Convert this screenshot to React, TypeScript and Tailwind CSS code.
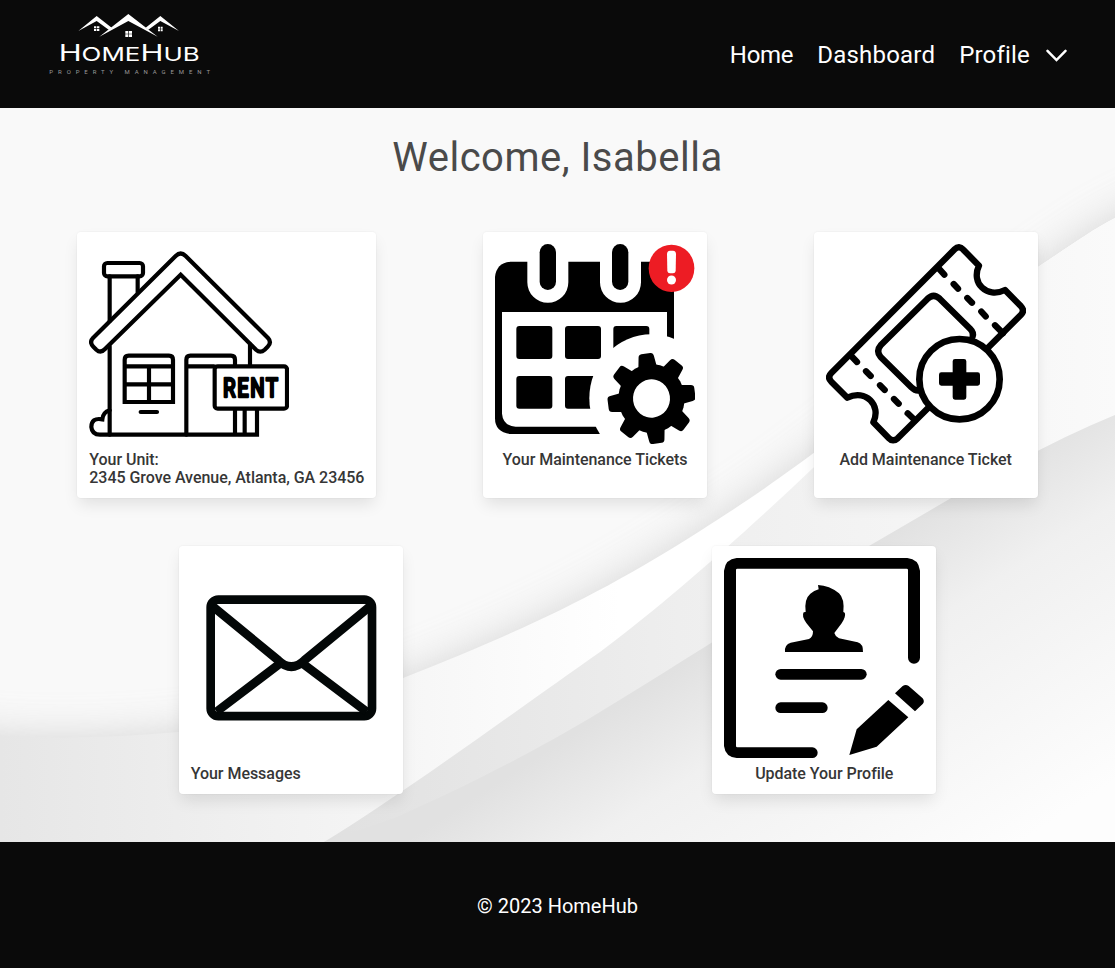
import type { ReactNode } from "react";

function Logo() {
  return (
    <svg className="h-[108px] w-[200px] shrink-0" viewBox="0 0 600 324" fill="#fff">
      <path d="M295 42 L383 110 L295 63 L208 110 Z" />
      <path d="M200 48 L245 83 L236 89 L200 63 L145 93 Z" />
      <path d="M391 48 L347 83 L355 89 L391 63 L447 93 Z" />
      <path d="M286 93h9v8h-9z M297 93h9v8h-9z M286 103h9v8h-9z M297 103h9v8h-9z" />
      <path d="M192 79h7v6h-7z M201 79h7v6h-7z M192 87h7v6h-7z M201 87h7v6h-7z" />
      <path d="M384 80h6v6h-6z M392 80h6v6h-6z M384 88h6v6h-6z M392 88h6v6h-6z" />
      <text x="86" y="182" textLength="423" lengthAdjust="spacingAndGlyphs" fontFamily="Inter, sans-serif" fontSize="68">
        H<tspan fontSize="57">OME</tspan>H<tspan fontSize="57">UB</tspan>
      </text>
      <text x="58" y="221" textLength="482" lengthAdjust="spacing" fontFamily="Roboto, sans-serif" fontSize="18" fill="#9a9a9a">
        PROPERTY MANAGEMENT
      </text>
    </svg>
  );
}

function HouseIcon() {
  return (
    <svg className="size-[200px]" viewBox="57 57 600 600" fill="none" stroke="#000" strokeWidth="12.5" strokeLinecap="round">
      <rect x="102" y="114" width="117" height="40" rx="10" />
      <path d="M119 154V288 M203 154V202 M119 364V629 M540 358V420" />
      <path d="M332 149L105 372Q92 386 79 374L70 365Q57 352 69 339L317 93Q332 78 347 93L594 339Q606 352 593 365L584 374Q571 386 558 374Z" />
      <path d="M119 556Q99 562 97 583Q64 577 64 606Q66 629 90 629H561V555 M524 555V629 M495 555V629" />
      <path d="M164 531V404Q164 392 176 392H297Q309 392 309 404V531Z M164 424H309 M164 478H309 M237 424V531 M212 561H261" />
      <path d="M349 629V404Q349 392 361 392H483Q495 392 495 404V420 M349 424H432" />
      <rect x="434" y="424" width="217" height="127" rx="9" />
      <text x="459" y="517" textLength="170" lengthAdjust="spacingAndGlyphs" fontFamily="Roboto, sans-serif" fontWeight="500" fontSize="80" letterSpacing="6" fill="#000" strokeWidth="7" strokeLinejoin="round">
        RENT
      </text>
    </svg>
  );
}

const teeth = [0, 45, 90, 135, 180, 225, 270, 315];

function CalendarIcon() {
  return (
    <svg className="size-[200px]" viewBox="60 57 600 600">
      <path d="M106 110H597V627H106Q60 622 60 580V156Q64 114 106 110Z" />
      <path d="M81 261H576V605H122Q84 602 81 566Z" fill="#fff" />
      <path d="M157 108V172A61.5 61.5 0 0 0 280 172V108Z M375 108V172A61.5 61.5 0 0 0 498 172V108Z" fill="#fff" />
      <rect x="194" y="57" width="49" height="138" rx="24.5" />
      <rect x="411" y="57" width="49" height="138" rx="24.5" />
      {[124, 270, 415].map((x) => (
        <g key={x}>
          <rect x={x} y="303" width="108" height="99" rx="9" />
          <rect x={x} y="453" width="108" height="98" rx="9" />
        </g>
      ))}
      <ellipse cx="529" cy="520" rx="186" ry="192" fill="#fff" />
      <g transform="translate(529.5 520.5) scale(.965 1) rotate(-7.5)">
        <circle r="103" />
        {teeth.map((a) => (
          <path key={a} d="M-29 -92L-24 -126Q-23 -136 -14 -136H14Q23 -136 24 -126L29 -92Z" transform={`rotate(${a})`} />
        ))}
        <circle r="57.5" fill="#fff" />
      </g>
      <ellipse cx="589.5" cy="130" rx="68.5" ry="71" fill="#ed1c24" />
      <path d="M576 86Q577 77 585 77H594Q602 77 603 86L602 138Q601 145 594 145H585Q578 145 577 138Z" fill="#fff" />
      <circle cx="589.5" cy="165" r="13.5" fill="#fff" />
    </svg>
  );
}

function TicketIcon() {
  return (
    <svg className="size-[200px]" viewBox="63 57 600 600" fill="none" stroke="#000" strokeWidth="19" strokeLinecap="round" strokeLinejoin="round">
      <path d="M549 368L648 269Q660 257 648 244L600 195C545 222 497 173 522 122L475 74Q462 60 449 73L79 444Q66 457 79 470L127 518C182 492 230 540 205 592L251 639Q264 653 278 640L370 548" />
      <path d="M399 128L418 149 M446 177L459 191 M487 219L501 233 M529 260L542 274 M570 301L594 325" />
      <path d="M136 390L156 411 M183 439L197 453 M225 481L239 495 M267 522L281 536 M308 565L330 586" />
      <path d="M503 334Q507 323 496 312L404 221Q386 204 368 221L227 361Q212 378 227 396L319 487Q330 498 341 497" />
      <circle cx="463.500" cy="462.500" r="120.500" fill="#fff" strokeWidth="20" />
      <path d="M450 402H477Q484 402 484 409V442H518Q525 442 525 449V475Q525 482 518 482H484V517Q484 524 477 524H450Q443 524 443 517V482H409Q402 482 402 475V449Q402 442 409 442H443V409Q443 402 450 402Z" fill="#000" stroke="none" />
    </svg>
  );
}

function EnvelopeIcon() {
  return (
    <svg className="size-[200px]" viewBox="63 54 600 600" fill="none" stroke="#030707" strokeWidth="26">
      <rect x="122" y="179" width="484" height="349.500" rx="23" />
      <path d="M128 199L325 361Q364 399 403 361L600 199 M140 515L328 372 M590 515L400 372" />
    </svg>
  );
}

function ProfileIcon() {
  return (
    <svg className="size-[200px]" viewBox="72 54 600 600">
      <path d="M110 54H622Q656 57 660 92V353A18 18 0 0 1 624 353V90Q624 86 620 86H112Q108 86 108 90V618Q108 622 112 622H337A16 16 0 0 1 337 654H110Q76 651 72 618V92Q76 57 110 54Z" />
      <path d="M356 148L354 135Q388 136 417 160Q434 176 430 216Q438 217 434 232Q431 242 425 250L403 279Q406 290 417 295L473 307Q490 312 489 336H255Q253 313 272 308L327 297Q339 292 339 274L319 249Q304 228 311 217L317 216Q312 177 331 161Q342 152 356 148Z" />
      <rect x="226" y="387" width="274" height="32" rx="16" />
      <rect x="226" y="487" width="157" height="32" rx="16" />
      <path d="M448 645L470 568L565 480L625 532L530 620Z M585 460L608 438Q617 432 626 438L668 475Q675 484 668 492L645 514Z" />
    </svg>
  );
}

function Card({ icon, align, children }: { icon: ReactNode; align: string; children: ReactNode }) {
  return (
    <div className="rounded bg-white px-3 pt-3 pb-[11px] shadow-[0_8px_16px_-2px_rgba(10,10,10,0.1),0_0_0_1px_rgba(10,10,10,0.02)]">
      {icon}
      <p className={`mt-[7px] text-[16px] leading-[18px] font-medium tracking-[-0.04px] whitespace-nowrap text-[#363636] ${align}`}>{children}</p>
    </div>
  );
}

function Backdrop() {
  const sweep = "M-80 618C0 632 90 632 178 624C260 614 330 598 403 570C540 516 610 480 700 423C850 328 900 273 1038 159C1070 138 1090 123 1115 110L1240 50V900H-80Z";
  return (
    <svg className="absolute inset-0 h-full w-full" viewBox="0 0 1115 734" preserveAspectRatio="none">
      <defs>
        <filter id="soft" x="-20%" y="-20%" width="140%" height="140%">
          <feGaussianBlur stdDeviation="20" />
        </filter>
        <linearGradient id="ribbon" gradientUnits="userSpaceOnUse" x1="0" y1="0" x2="620" y2="0">
          <stop offset="0" stopColor="#e6e6e6" />
          <stop offset="0.65" stopColor="#f6f6f6" />
          <stop offset="1" stopColor="#ffffff" />
        </linearGradient>
        <linearGradient id="middle" gradientUnits="userSpaceOnUse" x1="320" y1="0" x2="1115" y2="0">
          <stop offset="0" stopColor="#e0e0e0" />
          <stop offset="0.45" stopColor="#eeeeee" />
          <stop offset="1" stopColor="#fafafa" />
        </linearGradient>
        <linearGradient id="lower" gradientUnits="userSpaceOnUse" x1="730" y1="525" x2="910" y2="805">
          <stop offset="0" stopColor="#e1e1e1" />
          <stop offset="0.3" stopColor="#f0f0f0" />
          <stop offset="1" stopColor="#fdfdfd" />
        </linearGradient>
      </defs>
      <rect width="1115" height="734" fill="#f9f9f9" />
      <path d={sweep} fill="#c9c9c9" opacity="0.75" filter="url(#soft)" />
      <path d={sweep} fill="url(#ribbon)" />
      <path d="M324 734C400 688 520 600 600 544C670 492 750 420 813 360L1038 159C1070 138 1090 123 1115 110V734Z" fill="url(#middle)" />
      <path d="M324 734L397 709C480 672 540 640 600 604C700 543 780 490 869 438C950 391 1030 342 1115 307V734Z" fill="url(#lower)" />
    </svg>
  );
}

export default function App() {
  return (
    <div className="flex h-[968px] w-full flex-col bg-[#0a0a0a] font-['Roboto',sans-serif]">
      <header className="flex h-[108px] shrink-0 items-center justify-between pr-12 pl-[30px]">
        <Logo />
        <nav className="mt-0.5 flex items-center gap-6 text-2xl text-white">
          <a className="tracking-[-0.3px]">Home</a>
          <a className="tracking-[0.2px]">Dashboard</a>
          <a className="flex items-center gap-4 tracking-[0.2px]">
            Profile
            <svg className="mt-0.5 h-[14px] w-[21px]" viewBox="0 0 21 14" fill="none" stroke="#fff" strokeWidth="2.5" strokeLinecap="round">
              <path d="M1.500 1.800L10.500 11L19.500 1.800" />
            </svg>
          </a>
        </nav>
      </header>
      <main className="relative h-[734px] shrink-0">
        <Backdrop />
        <div className="relative flex h-full flex-col px-6">
          <h1 className="mt-[25px] text-center text-[40px] leading-[50px] font-normal tracking-[0.5px] text-[#4a4a4a]">Welcome, Isabella</h1>
          <div className="mt-[49px] flex justify-around">
            <Card icon={<HouseIcon />} align="text-left">
              Your Unit:
              <br />
              2345 Grove Avenue, Atlanta, GA 23456
            </Card>
            <Card icon={<CalendarIcon />} align="text-center">Your Maintenance Tickets</Card>
            <Card icon={<TicketIcon />} align="text-center">Add Maintenance Ticket</Card>
          </div>
          <div className="mt-12 flex justify-around">
            <Card icon={<EnvelopeIcon />} align="text-left">Your Messages</Card>
            <Card icon={<ProfileIcon />} align="text-center">Update Your Profile</Card>
          </div>
        </div>
      </main>
      <footer className="flex h-[126px] shrink-0 items-center justify-center pt-0.5 text-xl text-white">© 2023 HomeHub</footer>
    </div>
  );
}
